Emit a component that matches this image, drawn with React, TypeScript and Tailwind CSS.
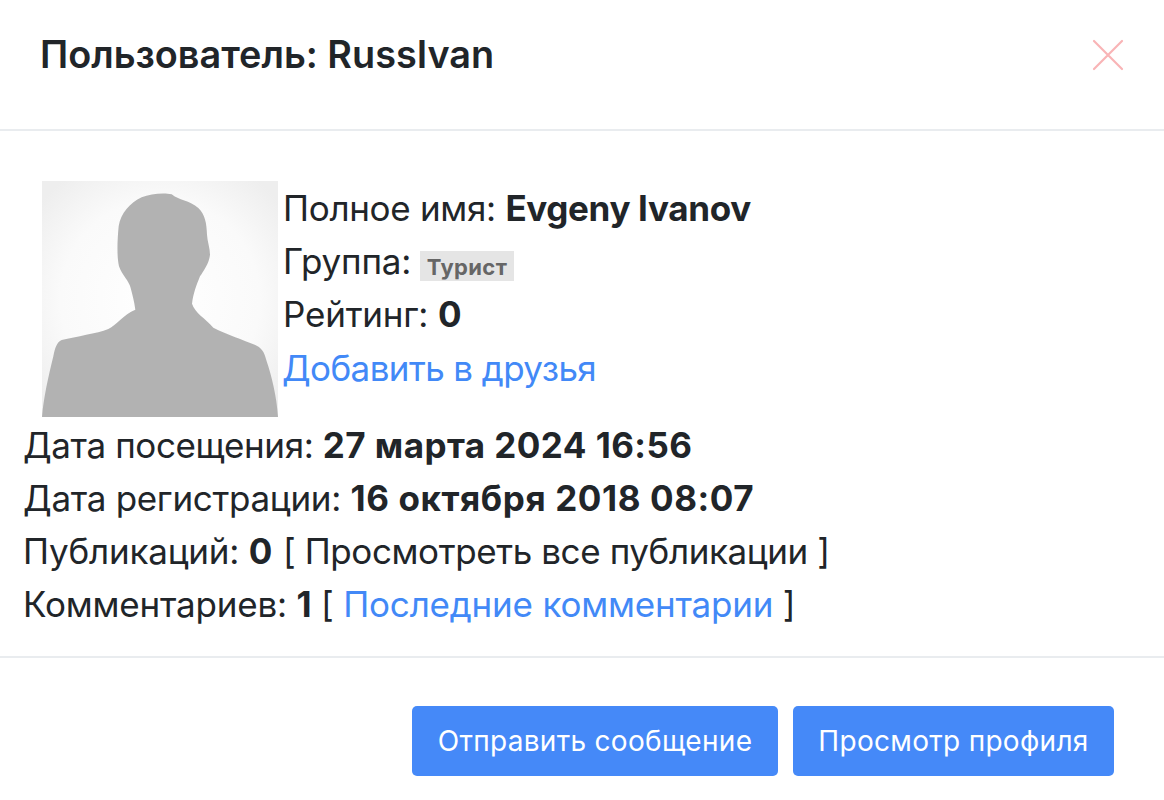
import React from "react";

function Avatar() {
  return (
    <svg viewBox="126 64 708 708" className="w-[236px] h-[236px] shrink-0 block">
      <defs>
        <radialGradient id="avatarBg" cx="50%" cy="50%" r="65%">
          <stop offset="0%" stopColor="#ffffff" />
          <stop offset="65%" stopColor="#fafafa" />
          <stop offset="100%" stopColor="#eeeeee" />
        </radialGradient>
      </defs>
      <rect x="126" y="64" width="708" height="708" fill="url(#avatarBg)" />
      <path
        fill="#b2b2b2"
        d="M126 772 C130 720 145 650 160 590 C165 565 170 548 185 541 C230 530 290 522 325 508 C350 495 370 465 406 450 C403 425 397 405 392 385 C388 365 365 345 357 320 C350 290 352 240 356 200 C362 160 390 130 425 113 C450 103 490 98 515 104 C535 122 570 122 595 145 C615 165 620 190 621 225 C622 245 630 265 630 285 C628 310 610 335 600 350 C590 375 580 400 576 432 C585 460 615 475 640 504 C680 525 730 540 770 558 C790 568 795 585 800 605 C815 650 830 710 834 772 Z"
      />
    </svg>
  );
}

function Row({ children }: { children: React.ReactNode }) {
  return <div className="h-[53.2px] leading-[53.2px] whitespace-nowrap">{children}</div>;
}

export default function App() {
  return (
    <div className="w-[1164px] h-[800px] bg-white overflow-hidden text-[#212529] font-['Inter','Liberation_Sans',sans-serif]">
      {/* Header */}
      <div className="h-[131px] pl-[40px] pr-[40px] flex items-start justify-between border-b-2 border-[#e9ecef]">
        <h2 className="mt-[30px] text-[37.8px] leading-[48px] font-semibold">Пользователь: RussIvan</h2>
        <svg viewBox="0 0 32 32" className="mt-[39px] w-[32px] h-[32px] text-[#f9b4b6]" fill="none" stroke="currentColor" strokeWidth="2.2" strokeLinecap="round">
          <path d="M2 2 L30 30 M30 2 L2 30" />
        </svg>
      </div>

      {/* Body */}
      <div className="h-[527px] pt-[50px] pl-[23px] text-[35px] tracking-[-0.2px] border-b-2 border-[#e9ecef]">
        <div className="flex ml-[19px] h-[236px]">
          <Avatar />
          <div className="pl-[5px] pt-[1px]">
            <Row>
              <span className="tracking-[-0.3px]">Полное имя: </span>
              <b className="font-bold tracking-[-0.35px]">Evgeny Ivanov</b>
            </Row>
            <Row>
              Группа:{" "}
              <span className="inline-block align-[-1px] -ml-[1px] px-[7px] h-[30px] leading-[32px] bg-[#e5e5e5] text-[#666666] text-[22px] font-bold tracking-[0.35px]">
                Турист
              </span>
            </Row>
            <Row>
              Рейтинг: <b className="font-bold">0</b>
            </Row>
            <Row>
              <a className="-ml-[1px] tracking-[-0.6px] text-[#4289f7]">Добавить в друзья</a>
            </Row>
          </div>
        </div>
        <div className="pt-[1.5px]">
          <Row>
            <span className="tracking-[-0.4px]">Дата посещения: </span>
            <b className="font-bold tracking-[0.45px]">27 марта 2024 16:56</b>
          </Row>
          <Row>
            <span className="tracking-[-0.3px]">Дата регистрации: </span>
            <b className="font-bold tracking-[0.6px]">16 октября 2018 08:07</b>
          </Row>
          <Row>
            Публикаций: <b className="font-bold">0</b> <span className="ml-[1px] tracking-[-0.4px]">[ Просмотреть все публикации ]</span>
          </Row>
          <Row>
            Комментариев: <b className="font-bold">1</b> [ <a className="text-[#4289f7]">Последние комментарии</a> ]
          </Row>
        </div>
      </div>

      {/* Footer */}
      <div className="pt-[48px] pr-[50px] flex justify-end gap-[15px]">
        <button className="h-[70px] w-[366px] rounded-[5px] bg-[#4589f8] text-white text-[28px] tracking-[0.3px]">Отправить сообщение</button>
        <button className="h-[70px] w-[321px] rounded-[5px] bg-[#4589f8] text-white text-[28px] tracking-[0.3px]">Просмотр профиля</button>
      </div>
    </div>
  );
}
